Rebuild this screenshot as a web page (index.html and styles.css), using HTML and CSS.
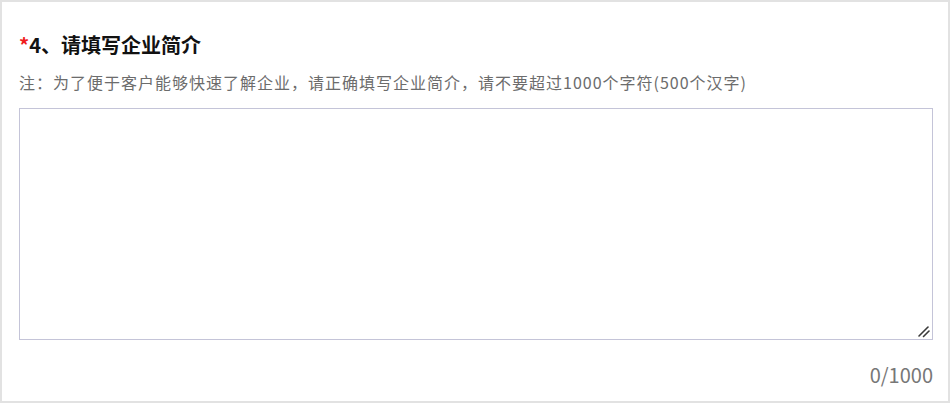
FILE: index.html
```html
<!DOCTYPE html>
<html lang="zh-CN">
<head>
<meta charset="utf-8">
<title>请填写企业简介</title>
<link rel="stylesheet" href="styles.css">
</head>
<body>
<div class="card">
  <div class="title"><span class="req">*</span>4、请填写企业简介</div>
  <div class="note">注：为了便于客户能够快速了解企业，请正确填写企业简介，请不要超过1000个字符(500个汉字)</div>
  <div class="field">
    <textarea class="intro" maxlength="1000"></textarea>
    <svg class="grip" width="14" height="14" viewBox="0 0 14 14" aria-hidden="true">
      <line x1="2" y1="12" x2="11" y2="3" stroke="#3a3a3a" stroke-width="1.6" stroke-linecap="round"/>
      <line x1="6.5" y1="12.5" x2="12" y2="7" stroke="#3a3a3a" stroke-width="1.6" stroke-linecap="round"/>
    </svg>
  </div>
  <div class="counter">0/1000</div>
</div>
</body>
</html>
```
FILE: styles.css
```css
html, body {
  margin: 0;
  padding: 0;
  background: #ffffff;
}
.card {
  box-sizing: border-box;
  width: 950px;
  height: 403px;
  border: 2px solid #e2e2e2;
  padding: 30px 15px 0 17px;
  display: flex;
  flex-direction: column;
  font-family: "Noto Sans CJK SC", "Noto Sans", sans-serif;
}
.title {
  font-size: 20px;
  font-weight: bold;
  line-height: 26px;
  color: #111;
}
.req {
  color: #f01c1c;
}
.note {
  margin-top: 12px;
  font-size: 16px;
  line-height: 24px;
  color: #6c6c6c;
  letter-spacing: 1px;
}
.field {
  position: relative;
  margin-top: 14px;
  width: 914px;
  height: 232px;
}
.intro {
  display: block;
  box-sizing: border-box;
  margin: 0;
  width: 914px;
  height: 232px;
  border: 1px solid #c4c4d8;
  border-radius: 0;
  padding: 6px 8px;
  font-family: inherit;
  font-size: 16px;
  resize: none;
  outline: none;
}
.grip {
  position: absolute;
  right: 2px;
  bottom: 2px;
}
.counter {
  margin-top: 21px;
  width: 914px;
  text-align: right;
  font-size: 20px;
  line-height: 28px;
  color: #777;
}
```
